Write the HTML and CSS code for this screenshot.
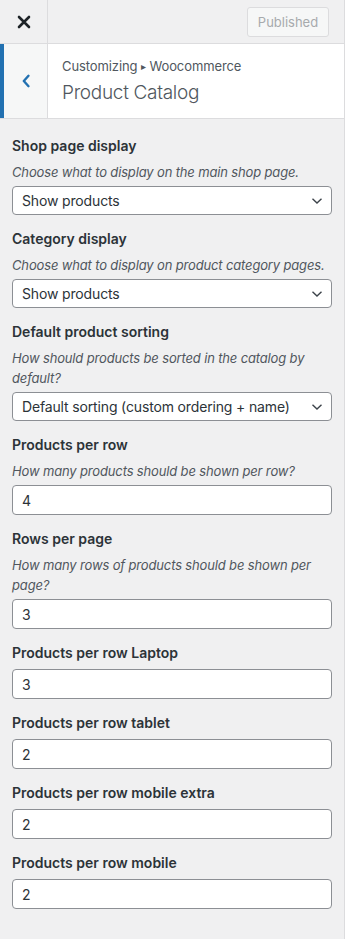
FILE: index.html
```html
<!doctype html>
<html lang="en">
    <head>
        <meta charset="UTF-8">
        <meta name="viewport" content="width=device-width, initial-scale=1.0">
        <title>Product Catalog</title>
        <link rel="stylesheet" href="styles.css">
    </head>
    <body>
        <div class="sidebar">
            <div class="top-bar">
                <button class="close-btn" type="button" aria-label="Close">
                    <svg width="14" height="14" viewBox="0 0 14 14">
                        <path d="M2 2 L12 12 M12 2 L2 12" stroke="#1d2327" stroke-width="2.6" stroke-linecap="round"/>
                    </svg>
                </button>
                <button class="publish-btn" type="button" disabled>Published</button>
            </div>

            <div class="section-header">
                <button class="back-btn" type="button" aria-label="Back">
                    <svg width="10" height="14" viewBox="0 0 10 14">
                        <path d="M7.5 1.8 L2.8 7 L7.5 12.2" fill="none" stroke="#2271b1" stroke-width="2.4" stroke-linecap="round" stroke-linejoin="round"/>
                    </svg>
                </button>
                <div class="section-title">
                    <span class="crumb">Customizing <span class="crumb-sep">&#9656;</span> Woocommerce</span>
                    <h3>Product Catalog</h3>
                </div>
            </div>

            <div class="controls">
                <div class="control">
                    <label class="control-title">Shop page display</label>
                    <p class="control-desc">Choose what to display on the main shop page.</p>
                    <div class="select-wrap">
                        <select class="field">
                            <option>Show products</option>
                        </select>
                        <svg class="select-arrow" width="12" height="8" viewBox="0 0 12 8"><path d="M1.5 1.8 L6 6 L10.5 1.8" fill="none" stroke="#3c434a" stroke-width="1.4"/></svg>
                    </div>
                </div>

                <div class="control">
                    <label class="control-title">Category display</label>
                    <p class="control-desc">Choose what to display on product category pages.</p>
                    <div class="select-wrap">
                        <select class="field">
                            <option>Show products</option>
                        </select>
                        <svg class="select-arrow" width="12" height="8" viewBox="0 0 12 8"><path d="M1.5 1.8 L6 6 L10.5 1.8" fill="none" stroke="#3c434a" stroke-width="1.4"/></svg>
                    </div>
                </div>

                <div class="control">
                    <label class="control-title">Default product sorting</label>
                    <p class="control-desc">How should products be sorted in the catalog by default?</p>
                    <div class="select-wrap">
                        <select class="field">
                            <option>Default sorting (custom ordering + name)</option>
                        </select>
                        <svg class="select-arrow" width="12" height="8" viewBox="0 0 12 8"><path d="M1.5 1.8 L6 6 L10.5 1.8" fill="none" stroke="#3c434a" stroke-width="1.4"/></svg>
                    </div>
                </div>

                <div class="control">
                    <label class="control-title">Products per row</label>
                    <p class="control-desc">How many products should be shown per row?</p>
                    <input class="field input" type="number" value="4">
                </div>

                <div class="control">
                    <label class="control-title">Rows per page</label>
                    <p class="control-desc">How many rows of products should be shown per page?</p>
                    <input class="field input" type="number" value="3">
                </div>

                <div class="control">
                    <label class="control-title">Products per row Laptop</label>
                    <input class="field input" type="number" value="3">
                </div>

                <div class="control">
                    <label class="control-title">Products per row tablet</label>
                    <input class="field input" type="number" value="2">
                </div>

                <div class="control">
                    <label class="control-title">Products per row mobile extra</label>
                    <input class="field input" type="number" value="2">
                </div>

                <div class="control">
                    <label class="control-title">Products per row mobile</label>
                    <input class="field input" type="number" value="2">
                </div>
            </div>
        </div>
    </body>
</html>
```

FILE: styles.css
```css
:root {
    --panel-bg: #f0f0f1;
    --border-color: #dcdcde;
    --field-border: #8c8f94;
    --text-color: #2c3338;
    --muted-color: #50575e;
    --blue-color: #2271b1;
}
* {
    box-sizing: border-box;
}
html {
    font-family: "Inter", "Noto Sans", sans-serif;
    font-size: 14px;
    color: var(--text-color);
    background-color: #fff;
}
body {
    margin: 0;
}
.sidebar {
    width: 345px;
    min-height: 939px;
    background-color: var(--panel-bg);
    border-right: 1px solid var(--border-color);
}

/* Barre du haut */
.top-bar {
    display: flex;
    align-items: center;
    justify-content: space-between;
    height: 44px;
    border-bottom: 1px solid var(--border-color);
}
.close-btn {
    width: 48px;
    height: 43px;
    display: flex;
    align-items: center;
    justify-content: center;
    padding: 0;
    border: 0;
    border-right: 1px solid var(--border-color);
    background: transparent;
}
.publish-btn {
    height: 30px;
    width: 82px;
    margin-right: 15px;
    padding: 0;
    font-family: inherit;
    font-size: 13px;
    color: #a7aaad;
    background-color: #f6f7f7;
    border: 1px solid var(--border-color);
    border-radius: 3px;
}

/* En-tête de section */
.section-header {
    display: flex;
    background-color: #fff;
    border-bottom: 1px solid var(--border-color);
}
.back-btn {
    width: 48px;
    flex-shrink: 0;
    display: flex;
    align-items: center;
    justify-content: center;
    padding: 0 0 0 1px;
    border: 0;
    border-left: 4px solid var(--blue-color);
    border-right: 1px solid var(--border-color);
    background-color: #f6f7f7;
}
.section-title {
    padding: 10px 10px 11px 14px;
    color: var(--muted-color);
}
.crumb {
    display: block;
    font-size: 13px;
    line-height: 24px;
    letter-spacing: -0.1px;
}
.crumb-sep {
    font-size: 10px;
    position: relative;
    top: -1px;
}
.section-title h3 {
    margin: 0;
    font-size: 19px;
    font-weight: 300;
    line-height: 28px;
    letter-spacing: -0.3px;
}

/* Contrôles */
.controls {
    padding: 15px 12px 20px;
}
.control {
    margin-bottom: 12px;
}
.control-title {
    display: block;
    font-size: 14px;
    font-weight: 600;
    line-height: 24px;
    margin-bottom: 4px;
    color: #2c3338;
}
.control-desc {
    margin: 0 0 4px;
    font-size: 13px;
    font-style: italic;
    line-height: 20px;
    letter-spacing: -0.15px;
    color: var(--muted-color);
}
.select-wrap {
    position: relative;
}
.field {
    display: block;
    width: 100%;
    font-family: inherit;
    font-size: 14px;
    letter-spacing: -0.15px;
    color: var(--text-color);
    background-color: #fff;
    border: 1px solid var(--field-border);
    border-radius: 4px;
    margin: 0;
}
select.field {
    height: 29px;
    padding: 0 24px 0 9px;
    appearance: none;
    -webkit-appearance: none;
}
.input {
    height: 30px;
    padding: 0 9px;
    -moz-appearance: textfield;
}
.input::-webkit-inner-spin-button,
.input::-webkit-outer-spin-button {
    -webkit-appearance: none;
    margin: 0;
}
.select-arrow {
    position: absolute;
    right: 9px;
    top: 11px;
    pointer-events: none;
}
```
